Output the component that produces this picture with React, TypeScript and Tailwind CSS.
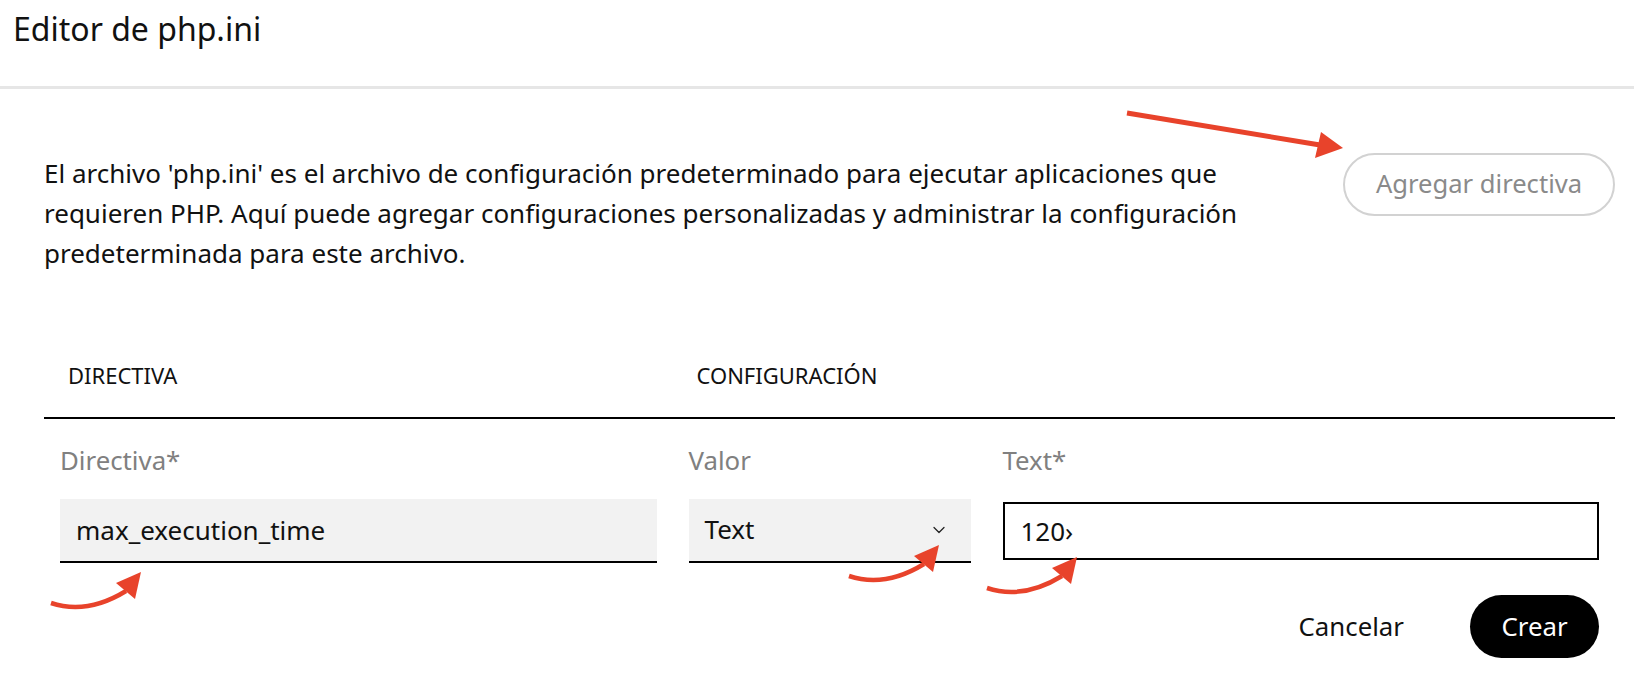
import { ChevronDown } from "lucide-react";

const RED = "#e8432b";

function CurvedArrow({ className }: { className: string }) {
  return (
    <svg className={className} width="100" height="45" viewBox="0 0 100 45" fill="none">
      <path d="M2 36 Q38 48 77 24" stroke={RED} strokeWidth="4.5" strokeLinecap="butt" />
      <polygon points="92,5 67,16 86,32" fill={RED} />
    </svg>
  );
}

function StraightArrow({ className }: { className: string }) {
  return (
    <svg className={className} width="230" height="60" viewBox="0 0 230 60" fill="none">
      <line x1="7" y1="8" x2="200" y2="40" stroke={RED} strokeWidth="5" />
      <polygon points="223,43 201,27 195,53" fill={RED} />
    </svg>
  );
}

export default function App() {
  return (
    <div
      className="relative min-h-screen w-full bg-white text-[#111]"
      style={{ fontFamily: '"Noto Sans", "Open Sans", sans-serif' }}
    >
      {/* Header */}
      <div className="h-[86px] px-[13px] pt-[7px]">
        <h1 className="text-[32px] leading-[1.362] font-normal">Editor de php.ini</h1>
      </div>
      <div className="h-[3px] bg-[#e6e6e6]" />

      {/* Body */}
      <div className="pl-[44px] pr-[19px] pt-[64px]">
        <div className="flex items-start justify-between">
          <p className="text-[26px] leading-[40px]">
            El archivo 'php.ini' es el archivo de configuración predeterminado para ejecutar aplicaciones que
            <br />
            requieren PHP. Aquí puede agregar configuraciones personalizadas y administrar la configuración
            <br />
            predeterminada para este archivo.
          </p>
          <button className="flex h-[63px] w-[272px] shrink-0 items-center justify-center rounded-full border-2 border-[#d2d2d2] text-[25.6px] text-[#8a8a8a]">
            Agregar directiva
          </button>
        </div>

        {/* Table header */}
        <div className="mt-[87px] grid h-[59px] grid-cols-[1fr_282px_1fr] gap-x-8 border-b-2 border-black px-4 text-[22px] leading-[1.39]">
          <div className="pl-2">DIRECTIVA</div>
          <div className="col-span-2 pl-2">CONFIGURACIÓN</div>
        </div>

        {/* Form row */}
        <div className="grid grid-cols-[1fr_282px_1fr] gap-x-8 px-4 pt-[24px]">
          <div className="flex flex-col">
            <label className="text-[25.8px] leading-[1.35] text-[#808080]">Directiva*</label>
            <input
              readOnly
              defaultValue="max_execution_time"
              className="mt-[21px] h-[64px] border-b-2 border-black bg-[#f2f2f2] px-4 text-[26px] text-[#111] outline-none"
            />
          </div>
          <div className="flex flex-col">
            <label className="text-[25.8px] leading-[1.35] text-[#808080]">Valor</label>
            <div className="mt-[21px] flex h-[64px] items-center justify-between border-b-2 border-black bg-[#f2f2f2] pl-4 pr-[22px] text-[26px]">
              <span>Text</span>
              <ChevronDown size={20} strokeWidth={1.5} className="text-[#222]" />
            </div>
          </div>
          <div className="flex flex-col">
            <label className="text-[25.8px] leading-[1.35] text-[#808080]">Text*</label>
            <input
              readOnly
              defaultValue="120›"
              className="mt-[24px] h-[58px] border-2 border-black bg-white px-4 text-[26px] text-[#111] outline-none"
            />
          </div>
        </div>

        {/* Actions */}
        <div className="mt-[32px] flex items-center justify-end gap-[34px] px-4">
          <button className="px-8 text-[25.8px] leading-[1.35]">Cancelar</button>
          <button className="h-[63px] w-[129px] rounded-full bg-black text-[25.8px] text-white">Crear</button>
        </div>
      </div>

      {/* Annotation arrows */}
      <StraightArrow className="absolute left-[1120px] top-[105px]" />
      <CurvedArrow className="absolute left-[49px] top-[567px]" />
      <CurvedArrow className="absolute left-[847px] top-[540px]" />
      <CurvedArrow className="absolute left-[985px] top-[552px]" />
    </div>
  );
}
